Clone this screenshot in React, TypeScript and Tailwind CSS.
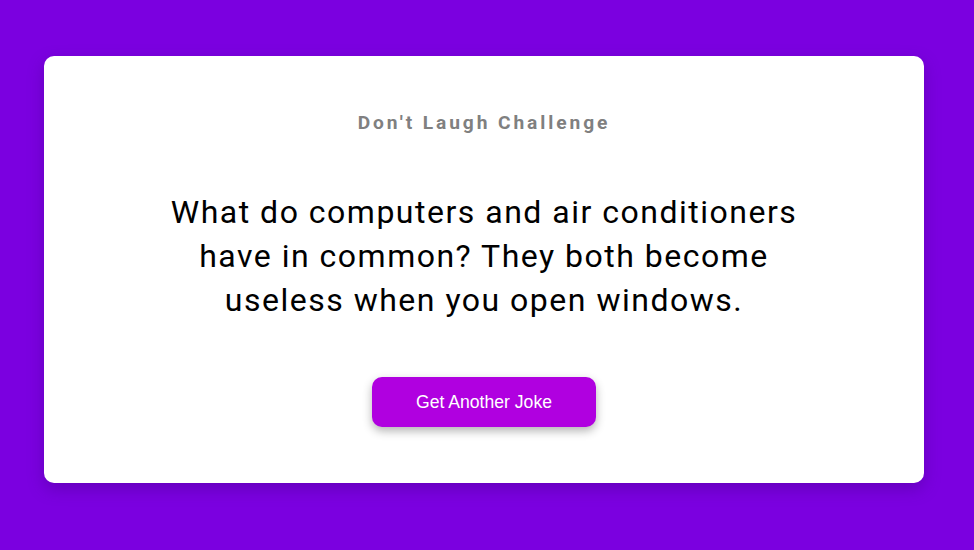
import React from "react";

export default function App() {
  return (
    <div className="w-[974px] h-[550px] bg-[#7b00e0] flex pl-[44px] pt-[56px]">
      <div className="w-[880px] h-[427px] bg-white rounded-[10px] shadow-[0_6px_16px_rgba(60,0,120,0.35)] flex flex-col items-center pt-[55px]">
        <h1 className="text-[19.2px] font-bold tracking-[2.9px] text-[#808080] leading-[24px] [font-family:Roboto,sans-serif]">
          Don't Laugh Challenge
        </h1>
        <p className="mt-[55px] max-w-[680px] text-center text-[32px] leading-[44px] tracking-[1.5px] text-black [font-family:Roboto,sans-serif]">
          What do computers and air conditioners have in common? They both become useless when you open windows.
        </p>
        <button className="mt-[55px] w-[224px] h-[50px] rounded-[10px] bg-[#b000e0] text-white text-[17.6px] [font-family:'Liberation_Sans',Arial,sans-serif] shadow-[0_4px_10px_rgba(0,0,0,0.3)]">
          Get Another Joke
        </button>
      </div>
    </div>
  );
}
